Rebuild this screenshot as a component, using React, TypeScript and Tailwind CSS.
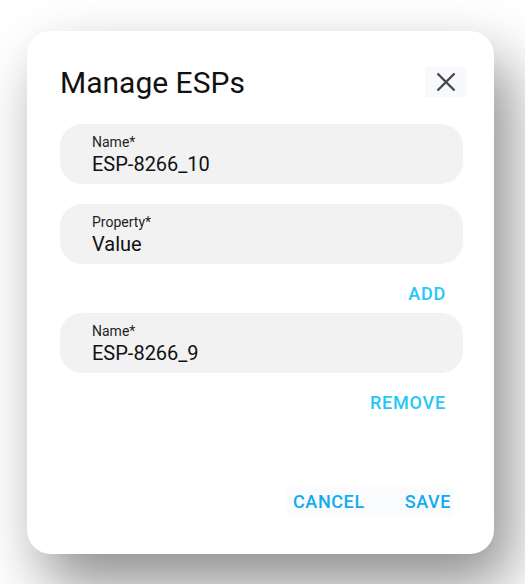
function Field({ label, value }: { label: string; value: string }) {
  return (
    <div className="h-[60px] rounded-[22px] bg-[#f2f2f2] pl-[32px] pt-[10px]">
      <div className="text-[14px] leading-[16px] text-[#1f1f1f]">{label}</div>
      <div className="mt-[2px] text-[20px] leading-[24px] text-[#111111]">{value}</div>
    </div>
  );
}

export default function App() {
  return (
    <div
      className="w-[525px] h-[584px] overflow-hidden bg-white pt-[31px] pl-[27px]"
      style={{ fontFamily: "Roboto, 'Liberation Sans', sans-serif" }}
    >
      <div className="flex h-[523px] w-[467px] flex-col rounded-[24px] bg-white pl-[33px] pr-[31px] pt-[36px] pb-[38px] shadow-[16px_30px_60px_rgba(0,0,0,0.45)]">
        {/* Header */}
        <div className="flex h-[30px] items-center justify-between">
          <h1 className="text-[30px] leading-[35px] text-[#111111]">Manage ESPs</h1>
          <button className="-mr-[3px] flex h-[30px] w-[41px] items-center justify-center bg-[#f8f9fb] text-[#45484d]">
            <svg width="20" height="20" viewBox="0 0 20 20" fill="none" stroke="currentColor" strokeWidth="2.4">
              <path d="M1.5 1.5 L18.5 18.5 M18.5 1.5 L1.5 18.5" />
            </svg>
          </button>
        </div>

        <div className="mt-[27px] flex flex-col gap-[20px]">
          <Field label="Name*" value="ESP-8266_10" />
          <Field label="Property*" value="Value" />
        </div>

        <div className="mt-[20px] flex justify-end pr-[17px]">
          <button className="text-[18px] font-medium leading-[20px] tracking-[0.8px] text-[#22c8f7]">ADD</button>
        </div>

        <div className="mt-[9px]">
          <Field label="Name*" value="ESP-8266_9" />
        </div>

        <div className="mt-[20px] flex justify-end pr-[17px]">
          <button className="text-[18px] font-medium leading-[20px] tracking-[0.8px] text-[#22c8f7]">REMOVE</button>
        </div>

        <div className="flex-1" />

        {/* Footer */}
        <div className="flex justify-end pr-[9px]">
          <div className="flex h-[29px] items-center gap-[40px] bg-[#fafbfd] pl-[6px] pr-[3px]">
            <button className="text-[18px] font-medium leading-[29px] tracking-[0.6px] text-[#12abf0]">CANCEL</button>
            <button className="text-[18px] font-medium leading-[29px] tracking-[0.6px] text-[#12abf0]">SAVE</button>
          </div>
        </div>
      </div>
    </div>
  );
}
